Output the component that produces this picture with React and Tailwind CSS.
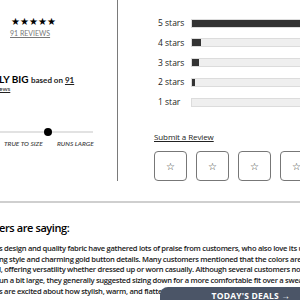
export default function App() {
  const rows = [
    { label: "5 stars", pct: "100%" },
    { label: "4 stars", pct: "9px" },
    { label: "3 stars", pct: "7px" },
    { label: "2 stars", pct: "3px" },
    { label: "1 star", pct: "0px" },
  ];
  const lines = [
    "s design and quality fabric have gathered lots of praise from customers, who also love its unique",
    "ng style and charming gold button details. Many customers mentioned that the colors are vibrant",
    "l, offering versatility whether dressed up or worn casually. Although several customers noted",
    "un a bit large, they generally suggested sizing down for a more comfortable fit over a sweater",
    "s are excited about how stylish, warm, and flattering this jacket is, making it a standout choice",
  ];

  return (
    <div className="relative h-[300px] w-[300px] overflow-hidden bg-white font-['Open_Sans',sans-serif] text-[#222]">
      <div className="flex h-[181px]">
        <div className="relative w-[117px] shrink-0">
          <div className="absolute left-[11px] top-[15px] text-[9.5px] leading-[14px] text-black">★★★★★</div>
          <div className="absolute left-[10px] top-[29px] text-[7px] leading-[9px] text-[#777] underline font-['Lato',sans-serif]">91 REVIEWS</div>
          <div className="absolute left-[-1px] top-[70px] whitespace-nowrap font-['Lato',sans-serif] leading-[14px]">
            <span className="text-[10px] font-bold text-black">LY BIG </span>
            <span className="text-[8px] font-bold">based on </span>
            <span className="text-[8px] font-bold underline">91</span>
          </div>
          <div className="absolute left-[-1px] top-[85px] text-[6.5px] leading-[8px] underline font-['Lato',sans-serif]">ews</div>
          <div className="absolute left-0 top-[131px] h-[2px] w-[93px] bg-[#e2e2e2]"></div>
          <div className="absolute left-[44px] top-[128px] h-[8px] w-[8px] rounded-full bg-black"></div>
          <div className="absolute left-[4px] top-[139px] text-[6.5px] italic font-semibold text-[#444] leading-[9px] font-['Lato',sans-serif]">TRUE TO SIZE</div>
          <div className="absolute left-[57px] top-[139px] text-[6.5px] italic font-semibold text-[#444] leading-[9px] font-['Lato',sans-serif]">RUNS LARGE</div>
        </div>
        <div className="w-px shrink-0 bg-[#7a7a7a]"></div>
        <div className="flex min-w-0 flex-1 flex-col pl-[40px] pt-[18px]">
          <div className="flex flex-col gap-[9.8px]">
            {rows.map((r) => (
              <div key={r.label} className="flex h-[10px] items-center">
                <div className="w-[33px] shrink-0 whitespace-nowrap text-[8.5px] leading-[10px] text-[#222]">{r.label}</div>
                <div className="h-[9px] w-[160px] shrink-0 border border-[#dcdcdc] bg-[#efefef]">
                  <div className="h-full bg-[#333]" style={{ width: r.pct }}></div>
                </div>
              </div>
            ))}
          </div>
          <div className="-ml-[4px] mt-[24px] whitespace-nowrap text-[8px] leading-[12px] tracking-[-0.1px] underline">Submit a Review</div>
          <div className="-ml-[4px] mt-[8px] flex gap-[9px]">
            {[0, 1, 2, 3].map((i) => (
              <div key={i} className="flex h-[30px] w-[33px] shrink-0 items-center justify-center rounded-[4px] border border-[#777] text-[10px] text-[#333]">
                ☆
              </div>
            ))}
          </div>
        </div>
      </div>
      <div className="mt-[20px] h-[2px] w-full bg-[#cfcfcf]"></div>
      <div className="-ml-[1px] mt-[17px] whitespace-nowrap text-[11px] font-semibold leading-[15px] tracking-[-0.4px] text-black">ers are saying:</div>
      <div className="-ml-[1px] mt-[8px] text-[7.6px] font-semibold leading-[10.7px] tracking-[-0.3px] text-[#1a1a1a]">
        {lines.map((l) => (
          <div key={l} className="whitespace-nowrap">{l}</div>
        ))}
      </div>
      <div className="absolute bottom-[-6px] right-0 flex h-[19px] w-[140px] items-start justify-end rounded-tl-[8px] bg-[#4b5567] pr-[10px] pt-[3px] text-[8.5px] font-bold tracking-[0.2px] text-white">
        TODAY'S DEALS →
      </div>
    </div>
  );
}
